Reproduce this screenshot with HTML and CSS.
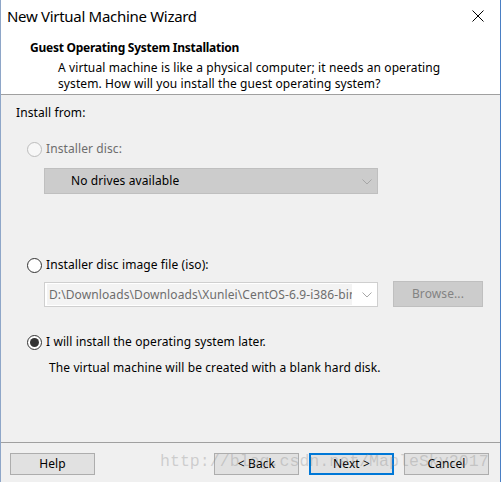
FILE: index.html
```html
<!DOCTYPE html>
<html>
<head>
<meta charset="utf-8">
<link rel="stylesheet" href="styles.css">
</head>
<body>
<div class="window">
  <div class="titlebar">
    <span class="title">New Virtual Machine Wizard</span>
    <svg class="close" width="12" height="12" viewBox="0 0 12 12"><path d="M0.5 0.5 L11.5 11.5 M11.5 0.5 L0.5 11.5" stroke="#000" stroke-width="1" fill="none"/></svg>
  </div>
  <div class="header">
    <div class="h-title">Guest Operating System Installation</div>
    <div class="h-desc">A virtual machine is like a physical computer; it needs an operating<br>system. How will you install the guest operating system?</div>
  </div>
  <div class="content">
    <div class="label">Install from:</div>
    <div class="radio-row disabled r1">
      <span class="radio"></span><span>Installer disc:</span>
    </div>
    <div class="select disabled-select">
      <span>No drives available</span>
      <svg class="chev" width="10" height="6" viewBox="0 0 10 6"><path d="M0.5 0.5 L5 5 L9.5 0.5" stroke="#a6a6a6" fill="none"/></svg>
    </div>
    <div class="radio-row r2">
      <span class="radio"></span><span>Installer disc image file (iso):</span>
    </div>
    <div class="iso-row">
      <div class="combo">
        <span class="combo-text">D:\Downloads\Downloads\Xunlei\CentOS-6.9-i386-bin-DVD1.iso</span>
        <svg class="chev" width="10" height="6" viewBox="0 0 10 6"><path d="M0.5 0.5 L5 5 L9.5 0.5" stroke="#a6a6a6" fill="none"/></svg>
      </div>
      <div class="browse">Browse...</div>
    </div>
    <div class="radio-row r3">
      <span class="radio checked"></span><span>I will install the operating system later.</span>
    </div>
    <div class="note">The virtual machine will be created with a blank hard disk.</div>
  </div>
  <div class="footer">
    <div class="btn help">Help</div>
    <div class="spacer"></div>
    <div class="btn">&lt; Back</div>
    <div class="btn primary">Next &gt;</div>
    <div class="btn">Cancel</div>
    <div class="watermark">http://blog.csdn.net/MapleSky2017</div>
  </div>
</div>
</body>
</html>
```
FILE: styles.css
```css
* { box-sizing: border-box; }
html, body { margin: 0; padding: 0; }
body {
  width: 501px;
  height: 482px;
  overflow: hidden;
  font-family: "Segoe UI", "Noto Sans", "Liberation Sans", sans-serif;
  font-size: 12px;
  line-height: 16px;
  letter-spacing: 0.1px;
  color: #000;
}
.window {
  position: relative;
  width: 501px;
  height: 482px;
  display: flex;
  flex-direction: column;
  border-left: 1px solid #8ea6c8;
  border-right: 1px solid #4a7fc4;
  background: #f0f0f0;
}
.titlebar {
  height: 30px;
  background: #fff;
  display: flex;
  align-items: center;
  padding-left: 6px;
  padding-right: 16px;
}
.title {
  font-size: 15px;
  letter-spacing: -0.3px;
  line-height: 20px;
  flex: 1;
  padding-top: 1px;
}
.close { display: block; margin-top: 1px; }
.header {
  background: #fff;
  height: 65px;
  padding: 10px 0 0 29px;
  border-bottom: 1px solid #a0a0a0;
}
.h-title { font-weight: bold; letter-spacing: -0.25px; }
.h-desc { margin-top: 4px; padding-left: 28px; }
.content {
  flex: 1;
  padding: 10px 0 0 15px;
  display: flex;
  flex-direction: column;
  align-items: flex-start;
}
.radio-row {
  display: flex;
  align-items: center;
  height: 16px;
  margin-left: 11px;
}
.radio {
  width: 15px;
  height: 15px;
  border-radius: 50%;
  border: 1px solid #333;
  background: #fff;
  margin-right: 4px;
  display: flex;
  align-items: center;
  justify-content: center;
}
.radio.checked::after {
  content: "";
  width: 9px;
  height: 9px;
  border-radius: 50%;
  background: #333;
}
.disabled { color: #6d6d6d; }
.disabled .radio { border-color: #bcbcbc; background: #f7f7f7; }
.r1 { margin-top: 20px; }
.select {
  margin-top: 11px;
  margin-left: 28px;
  width: 334px;
  height: 26px;
  display: flex;
  align-items: center;
  padding: 0 5px 0 26px;
}
.select span { flex: 1; }
.disabled-select { background: #cccccc; border: 1px solid #bfbfbf; }
.chev { display: block; margin-top: 1px; }
.r2 { margin-top: 63px; }
.iso-row {
  margin-top: 8px;
  margin-left: 28px;
  display: flex;
  align-items: flex-start;
  gap: 15px;
}
.combo {
  margin-top: 1px;
  width: 334px;
  height: 25px;
  background: #fff;
  border: 1px solid #cfcfcf;
  display: flex;
  align-items: center;
  padding: 0 5px 0 2px;
}
.combo-text {
  width: 306px;
  height: 21px;
  line-height: 21px;
  padding-left: 2px;
  background: #f3f3f3;
  color: #6d6d6d;
  white-space: nowrap;
  overflow: hidden;
  margin-right: 10px;
}
.browse {
  width: 90px;
  height: 26px;
  background: #cccccc;
  border: 1px solid #bfbfbf;
  color: #838383;
  display: flex;
  align-items: center;
  justify-content: center;
}
.r3 { margin-top: 27px; }
.note { margin-top: 10px; margin-left: 33px; }
.footer {
  position: relative;
  height: 40px;
  border-top: 1px solid #a0a0a0;
  display: flex;
  align-items: flex-start;
  padding: 10px 11px 0 9px;
}
.btn {
  width: 85px;
  height: 22px;
  background: #e1e1e1;
  border: 1px solid #adadad;
  display: flex;
  align-items: center;
  justify-content: center;
}
.btn + .btn { margin-left: 10px; }
.spacer { flex: 1; }
.btn.primary { border: 2px solid #0078d7; }
.watermark {
  position: absolute;
  left: 159px;
  top: 7px;
  font-family: "Liberation Mono", monospace;
  font-size: 16.6px;
  letter-spacing: 0;
  line-height: 24px;
  color: rgba(140, 140, 140, 0.35);
  white-space: nowrap;
  pointer-events: none;
}
```
